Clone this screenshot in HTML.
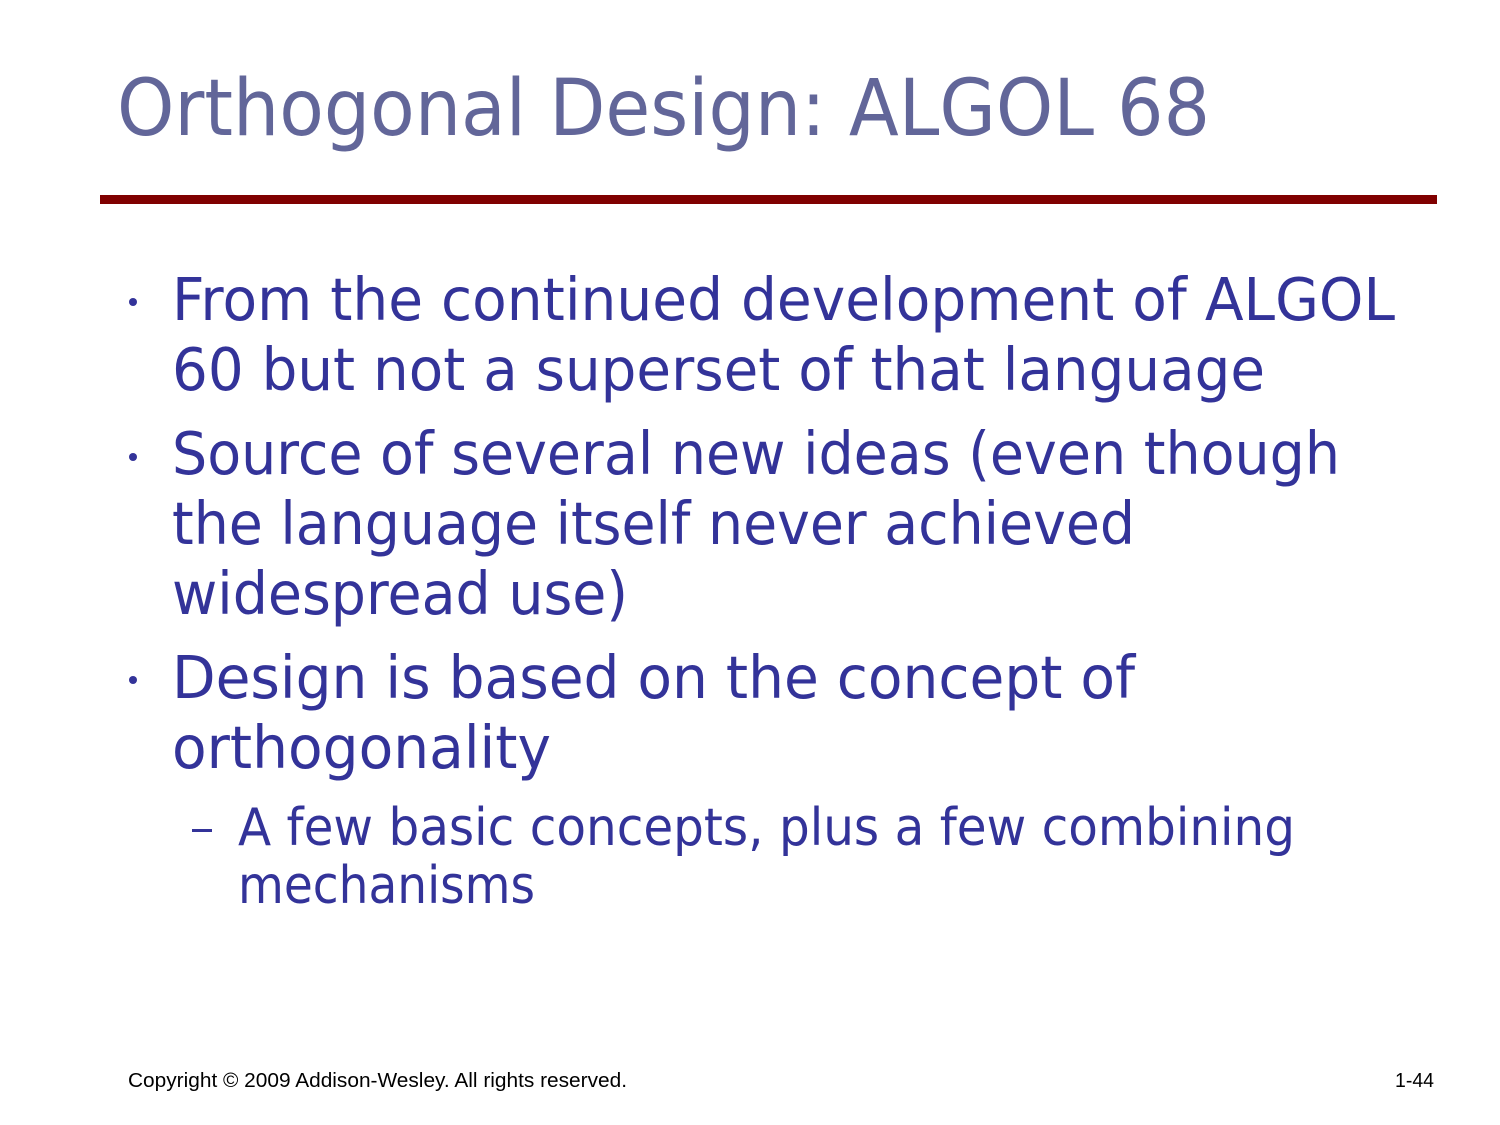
<!DOCTYPE html>
<html><head><meta charset="utf-8"><style>
html,body{margin:0;padding:0;background:#fff;width:1500px;height:1125px;overflow:hidden}
svg{display:block}
</style></head><body>
<svg width="1500" height="1125" viewBox="0 0 1500 1125" xmlns="http://www.w3.org/2000/svg">
<g font-family="'DejaVu Sans', Verdana, sans-serif">
<text x="117" y="135" font-size="78" fill="#626699" textLength="1093" lengthAdjust="spacingAndGlyphs">Orthogonal Design: ALGOL 68</text>
<rect x="100" y="195" width="1337" height="9" fill="#800000"/>
<g fill="#333399" font-size="59">
<circle cx="133" cy="302" r="4"/>
<circle cx="133" cy="457" r="4"/>
<circle cx="133" cy="680" r="4"/>
<text x="172" y="320" textLength="1223" lengthAdjust="spacingAndGlyphs">From the continued development of ALGOL</text>
<text x="172" y="390" textLength="1093" lengthAdjust="spacingAndGlyphs">60 but not a superset of that language</text>
<text x="172" y="474" textLength="1168" lengthAdjust="spacingAndGlyphs">Source of several new ideas (even though</text>
<text x="172" y="544" textLength="963" lengthAdjust="spacingAndGlyphs">the language itself never achieved</text>
<text x="172" y="614" textLength="456" lengthAdjust="spacingAndGlyphs">widespread use)</text>
<text x="172" y="698" textLength="963" lengthAdjust="spacingAndGlyphs">Design is based on the concept of</text>
<text x="172" y="768" textLength="379" lengthAdjust="spacingAndGlyphs">orthogonality</text>
<rect x="192" y="829" width="20" height="3"/>
<text x="238" y="845" font-size="52" textLength="1057" lengthAdjust="spacingAndGlyphs">A few basic concepts, plus a few combining</text>
<text x="238" y="903" font-size="52" textLength="297" lengthAdjust="spacingAndGlyphs">mechanisms</text>
</g>
</g>
<g font-family="'Liberation Sans', Arial, sans-serif" font-size="20" fill="#000">
<text x="128" y="1087" textLength="499" lengthAdjust="spacingAndGlyphs">Copyright © 2009 Addison-Wesley. All rights reserved.</text>
<text x="1395" y="1087" textLength="39" lengthAdjust="spacingAndGlyphs">1-44</text>
</g>
</svg>
</body></html>
